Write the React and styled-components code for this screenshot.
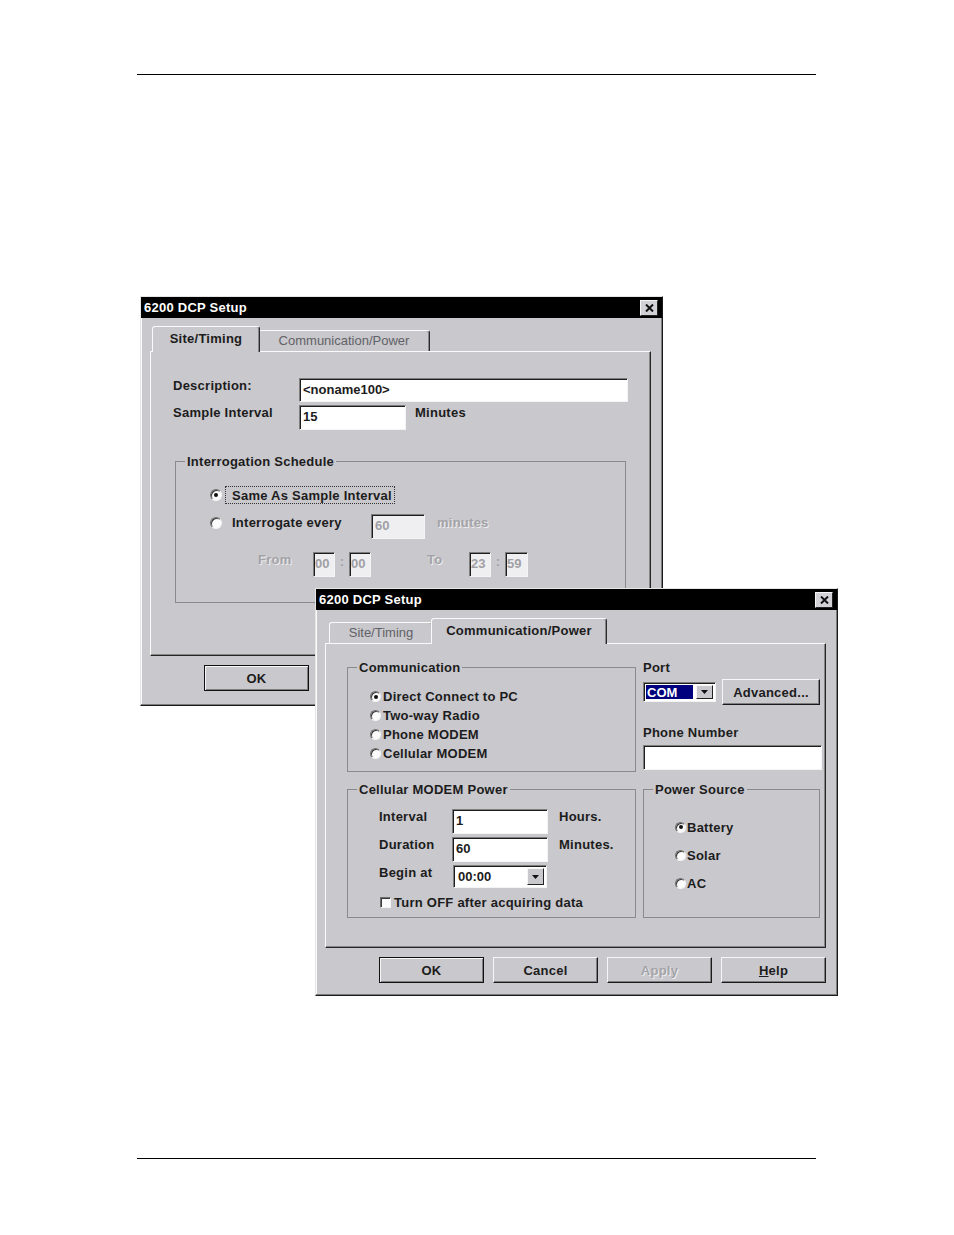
import React from 'react';
import styled, { createGlobalStyle, css } from 'styled-components';

const FACE = '#c9c8cd';
const INK = '#1c1c1c';

const GlobalStyle = createGlobalStyle`
  html, body { margin: 0; padding: 0; background: #fff; }
  body { font-family: "Liberation Sans", Arial, sans-serif; color: ${INK}; }
`;

const Page = styled.div`
  width: 679px;
  padding: 74px 0 0 137px;
  height: 1161px;
`;

const Rule = styled.div`
  height: 1px;
  background: #000;
`;

const Desktop = styled.div`
  position: relative;
  height: 1083px;
`;

const Window = styled.div`
  position: absolute;
  left: ${p => p.$x}px;
  top: ${p => p.$y}px;
  width: 523px;
  height: ${p => p.$h || 408}px;
  box-sizing: border-box;
  background: ${FACE};
  border: 1px solid;
  border-color: #e6e6e6 #1a1a1a #1a1a1a #e6e6e6;
  box-shadow: inset -1px -1px 0 #7c7c7c, inset 1px 1px 0 #fafafa;
  display: flex;
  flex-direction: column;
`;

const TitleBar = styled.div`
  height: 21px;
  flex: none;
  background: #000;
  color: #fff;
  display: flex;
  align-items: center;
  justify-content: space-between;
  padding: 0 4px 0 3px;
  font-size: 13px;
  font-weight: bold;
  letter-spacing: 0.25px;
`;

const CloseBox = styled.span`
  box-sizing: border-box;
  width: 18px;
  height: 16px;
  background: #d2d1d5;
  border: 1px solid;
  border-color: #f6f6f6 #222 #222 #f6f6f6;
  display: flex;
  align-items: center;
  justify-content: center;
`;

const TabRow = styled.div`
  display: flex;
  align-items: flex-end;
  height: 25px;
  margin: 8px 0 0 13px;
  position: relative;
  z-index: 1;
`;

const Tab = styled.div`
  box-sizing: border-box;
  flex: none;
  width: ${p => p.$w}px;
  height: 21px;
  display: flex;
  align-items: center;
  justify-content: center;
  background: ${FACE};
  border: 1px solid;
  border-bottom: none;
  border-color: #fafafa #2a2a2a transparent #fafafa;
  border-radius: 3px 3px 0 0;
  box-shadow: inset -1px 0 0 #868686;
  font-size: 13px;
  color: #626266;
  padding-bottom: 1px;
  ${p => p.$active && css`
    width: ${p.$w + 4}px;
    height: 26px;
    margin: 0 -2px -1px;
    position: relative;
    z-index: 2;
    color: ${INK};
    font-weight: bold;
    letter-spacing: 0.25px;
    padding-bottom: 3px;
  `}
`;

const Panel = styled.div`
  box-sizing: border-box;
  flex: none;
  margin-left: 9px;
  width: 501px;
  height: 305px;
  border: 1px solid;
  border-color: #fafafa #262626 #262626 #fafafa;
  box-shadow: inset -1px -1px 0 #868686;
  padding: ${p => p.$pad};
`;

const ButtonRow = styled.div`
  display: flex;
  gap: 9px;
  margin-top: 9px;
  padding-left: 63px;
`;

const Button = styled.button`
  box-sizing: border-box;
  flex: none;
  width: ${p => p.$w || 105}px;
  height: 26px;
  padding: 0;
  background: ${FACE};
  border: 1px solid;
  border-color: #f6f6f6 #1a1a1a #1a1a1a #f6f6f6;
  box-shadow: inset -1px -1px 0 #7e7e7e;
  font-family: "Liberation Sans", Arial, sans-serif;
  font-size: 13px;
  font-weight: bold;
  letter-spacing: 0.25px;
  color: ${INK};
  ${p => p.$default && css`
    border-color: #111;
    box-shadow: inset 1px 1px 0 #f6f6f6, inset -1px -1px 0 #7e7e7e;
  `}
  &:disabled {
    color: #a4a4a8;
    text-shadow: 1px 1px 0 #eeeeee;
  }
`;

const Label = styled.span`
  flex: none;
  box-sizing: border-box;
  width: ${p => (p.$w ? `${p.$w}px` : 'auto')};
  margin-left: ${p => p.$ml || 0}px;
  margin-top: ${p => p.$mt || 0}px;
  font-size: 13px;
  font-weight: bold;
  line-height: 15px;
  letter-spacing: 0.25px;
  white-space: nowrap;
  color: ${p => (p.$dim ? '#a3a3a7' : INK)};
  ${p => p.$dim && 'text-shadow: 1px 1px 0 #eeeeee;'}
`;

const TextBox = styled.input`
  box-sizing: border-box;
  flex: none;
  width: ${p => p.$w}px;
  height: ${p => p.$h || 25}px;
  margin: 0;
  padding: 0 0 2px ${p => (p.$tight ? 1 : 3)}px;
  background: ${p => (p.disabled ? '#efeff1' : '#fff')};
  border: 1px solid;
  border-color: #7d7d7d #f4f4f4 #f4f4f4 #7d7d7d;
  box-shadow: inset 1px 1px 0 #1e1e1e;
  outline: none;
  font-family: "Liberation Sans", Arial, sans-serif;
  font-size: 13px;
  font-weight: bold;
  color: ${INK};
  &:disabled { color: #a0a0a4; }
`;

const FormRow = styled.div`
  display: flex;
  align-items: ${p => p.$align || 'flex-start'};
  height: ${p => (p.$h ? `${p.$h}px` : 'auto')};
  margin-top: ${p => p.$mt || 0}px;
`;

const Group = styled.fieldset`
  box-sizing: border-box;
  flex: none;
  min-width: 0;
  width: ${p => p.$w}px;
  height: ${p => p.$h}px;
  margin: ${p => p.$mt || 0}px 0 0 ${p => p.$ml || 0}px;
  padding: 0;
  border: 1px solid #8a8a8e;
`;

const Legend = styled.legend`
  margin-left: 9px;
  padding: 0 2px;
  font-size: 13px;
  font-weight: bold;
  line-height: 15px;
  letter-spacing: 0.25px;
  color: ${INK};
`;

const GroupBody = styled.div`
  display: flex;
  flex-direction: column;
  gap: ${p => p.$gap || 0}px;
  padding: ${p => p.$pt || 0}px 0 0 ${p => p.$pl || 0}px;
`;

const RadioMark = styled.span`
  box-sizing: border-box;
  flex: none;
  width: ${p => p.$size || 11}px;
  height: ${p => p.$size || 11}px;
  margin-top: ${p => p.$mt || 0}px;
  border-radius: 50%;
  background: #fbfbfb;
  border: 1px solid;
  border-color: #6e6e6e #f4f4f4 #f4f4f4 #6e6e6e;
  box-shadow: inset 1px 1px 0 #3a3a3a;
  display: flex;
  align-items: center;
  justify-content: center;
  &::after {
    content: '';
    display: ${p => (p.$checked ? 'block' : 'none')};
    width: 4px;
    height: 4px;
    border-radius: 50%;
    background: #111;
  }
`;

const CheckMark = styled.span`
  box-sizing: border-box;
  flex: none;
  width: 11px;
  height: 11px;
  margin-left: 1px;
  background: #fbfbfb;
  border: 1px solid;
  border-color: #6e6e6e #f4f4f4 #f4f4f4 #6e6e6e;
  box-shadow: inset 1px 1px 0 #3a3a3a;
`;

const Option = styled.div`
  display: flex;
  align-items: center;
  height: ${p => p.$h || 19}px;
`;

const FocusText = styled.span`
  box-sizing: border-box;
  height: 18px;
  margin-left: 3px;
  padding: 0 2px 0 6px;
  border: 1px dotted #333;
  display: flex;
  align-items: center;
  font-size: 13px;
  font-weight: bold;
  letter-spacing: 0.25px;
`;

const Colon = styled.span`
  flex: none;
  width: 14px;
  text-align: center;
  font-size: 13px;
  font-weight: bold;
  line-height: 20px;
  color: #a3a3a7;
`;

const Combo = styled.div`
  box-sizing: border-box;
  flex: none;
  width: ${p => p.$w}px;
  height: ${p => p.$h}px;
  display: flex;
  align-items: stretch;
  padding: 2px;
  background: #fff;
  border: 1px solid;
  border-color: #7d7d7d #f4f4f4 #f4f4f4 #7d7d7d;
  box-shadow: inset 1px 1px 0 #1e1e1e;
`;

const ComboValue = styled.span`
  flex: 1;
  display: flex;
  align-items: center;
  margin-right: 3px;
  padding-left: ${p => (p.$selected ? 1 : 2)}px;
  font-size: 13px;
  font-weight: bold;
  background: ${p => (p.$selected ? '#00007e' : 'transparent')};
  color: ${p => (p.$selected ? '#fff' : INK)};
`;

const ComboArrow = styled.span`
  box-sizing: border-box;
  flex: none;
  width: 17px;
  background: ${FACE};
  border: 1px solid;
  border-color: #f6f6f6 #222 #222 #f6f6f6;
  display: flex;
  align-items: center;
  justify-content: center;
`;

const PortRow = styled.div`
  display: flex;
  align-items: center;
  gap: 6px;
  height: 26px;
  margin-top: 4px;
`;

const TwoCol = styled.div`
  display: grid;
  grid-template-columns: 289px 179px;
  grid-template-rows: 112px 136px;
  column-gap: 7px;
  row-gap: 10px;
`;

const Stack = styled.div`
  display: flex;
  flex-direction: column;
`;

const Arrow = () => (
  <svg width="7" height="4" viewBox="0 0 7 4"><path d="M0 0h7L3.5 4z" fill="#111" /></svg>
);

const TABS = [
  { label: 'Site/Timing', w: 104 },
  { label: 'Communication/Power', w: 172 },
];

function Dialog({ x, y, h, tab, pad, full, children }) {
  return (
    <Window $x={x} $y={y} $h={h}>
      <TitleBar>
        <span>6200 DCP Setup</span>
        <CloseBox>
          <svg width="9" height="8" viewBox="0 0 9 8">
            <path d="M1 0.5l7 7M8 0.5l-7 7" stroke="#111" strokeWidth="2" />
          </svg>
        </CloseBox>
      </TitleBar>
      <TabRow>
        {TABS.map((t, i) => (
          <Tab key={t.label} $w={t.w} $active={i === tab}>{t.label}</Tab>
        ))}
      </TabRow>
      <Panel $pad={pad}>{children}</Panel>
      <ButtonRow>
        <Button $default>OK</Button>
        {full && (
          <>
            <Button>Cancel</Button>
            <Button disabled>Apply</Button>
            <Button><u>H</u>elp</Button>
          </>
        )}
      </ButtonRow>
    </Window>
  );
}

function Radio({ checked, label, size, gap = 2 }) {
  return (
    <Option>
      <RadioMark $checked={checked} $size={size} />
      <Label $ml={gap}>{label}</Label>
    </Option>
  );
}

function SiteTiming() {
  return (
    <>
      <FormRow $mt={26}>
        <Label $w={126}>Description:</Label>
        <TextBox $w={329} $h={24} readOnly value="<noname100>" />
      </FormRow>
      <FormRow $mt={3}>
        <Label $w={126}>Sample Interval</Label>
        <TextBox $w={107} readOnly value="15" />
        <Label $ml={9}>Minutes</Label>
      </FormRow>
      <Group $w={451} $h={149} $mt={24} $ml={2}>
        <Legend>Interrogation Schedule</Legend>
        <GroupBody $pt={17} $pl={34}>
          <Option $h={18}>
            <RadioMark $checked $size={12} />
            <FocusText>Same As Sample Interval</FocusText>
          </Option>
          <FormRow $mt={10} $h={25}>
            <RadioMark $size={12} $mt={3} />
            <Label $ml={10} $w={139} $mt={1}>Interrogate every</Label>
            <TextBox $w={54} disabled value="60" />
            <Label $ml={12} $mt={1} $dim>minutes</Label>
          </FormRow>
          <FormRow $mt={13} $h={25}>
            <Label $ml={48} $w={55} $dim>From</Label>
            <TextBox $w={22} $tight disabled value="00" />
            <Colon>:</Colon>
            <TextBox $w={22} $tight disabled value="00" />
            <Label $ml={56} $w={42} $dim>To</Label>
            <TextBox $w={22} $tight disabled value="23" />
            <Colon>:</Colon>
            <TextBox $w={23} $tight disabled value="59" />
          </FormRow>
        </GroupBody>
      </Group>
    </>
  );
}

function CommPower() {
  return (
    <TwoCol>
      <Group $w={289} $h={112}>
        <Legend>Communication</Legend>
        <GroupBody $pt={12} $pl={22}>
          <Radio checked label="Direct Connect to PC" />
          <Radio label="Two-way Radio" />
          <Radio label="Phone MODEM" />
          <Radio label="Cellular MODEM" />
        </GroupBody>
      </Group>
      <Stack>
        <Label>Port</Label>
        <PortRow>
          <Combo $w={73} $h={20}>
            <ComboValue $selected>COM</ComboValue>
            <ComboArrow><Arrow /></ComboArrow>
          </Combo>
          <Button $w={98}>Advanced...</Button>
        </PortRow>
        <Label $mt={20}>Phone Number</Label>
        <FormRow $mt={5}>
          <TextBox $w={179} readOnly value="" />
        </FormRow>
      </Stack>
      <Group $w={289} $h={136}>
        <Legend>Cellular MODEM Power</Legend>
        <GroupBody $pt={12} $pl={31}>
          <FormRow>
            <Label $w={73}>Interval</Label>
            <TextBox $w={96} readOnly value="1" />
            <Label $ml={11}>Hours.</Label>
          </FormRow>
          <FormRow $mt={3}>
            <Label $w={73}>Duration</Label>
            <TextBox $w={96} readOnly value="60" />
            <Label $ml={11}>Minutes.</Label>
          </FormRow>
          <FormRow $mt={3}>
            <Label $w={74}>Begin at</Label>
            <Combo $w={94} $h={23}>
              <ComboValue>00:00</ComboValue>
              <ComboArrow><Arrow /></ComboArrow>
            </Combo>
          </FormRow>
          <FormRow $mt={7} $h={15} $align="center">
            <CheckMark />
            <Label $ml={3}>Turn OFF after acquiring data</Label>
          </FormRow>
        </GroupBody>
      </Group>
      <Group $w={177} $h={136}>
        <Legend>Power Source</Legend>
        <GroupBody $pt={21} $pl={31} $gap={10}>
          <Option $h={18}><RadioMark $checked /><Label $ml={1}>Battery</Label></Option>
          <Option $h={18}><RadioMark /><Label $ml={1}>Solar</Label></Option>
          <Option $h={18}><RadioMark /><Label $ml={1}>AC</Label></Option>
        </GroupBody>
      </Group>
    </TwoCol>
  );
}

export default function App() {
  return (
    <>
      <GlobalStyle />
      <Page>
        <Rule />
        <Desktop>
          <Dialog x={3} y={221} h={410} tab={0} pad="0 0 0 22px">
            <SiteTiming />
          </Dialog>
          <Dialog x={178} y={513} tab={1} pad="16px 0 0 21px" full>
            <CommPower />
          </Dialog>
        </Desktop>
        <Rule />
      </Page>
    </>
  );
}
